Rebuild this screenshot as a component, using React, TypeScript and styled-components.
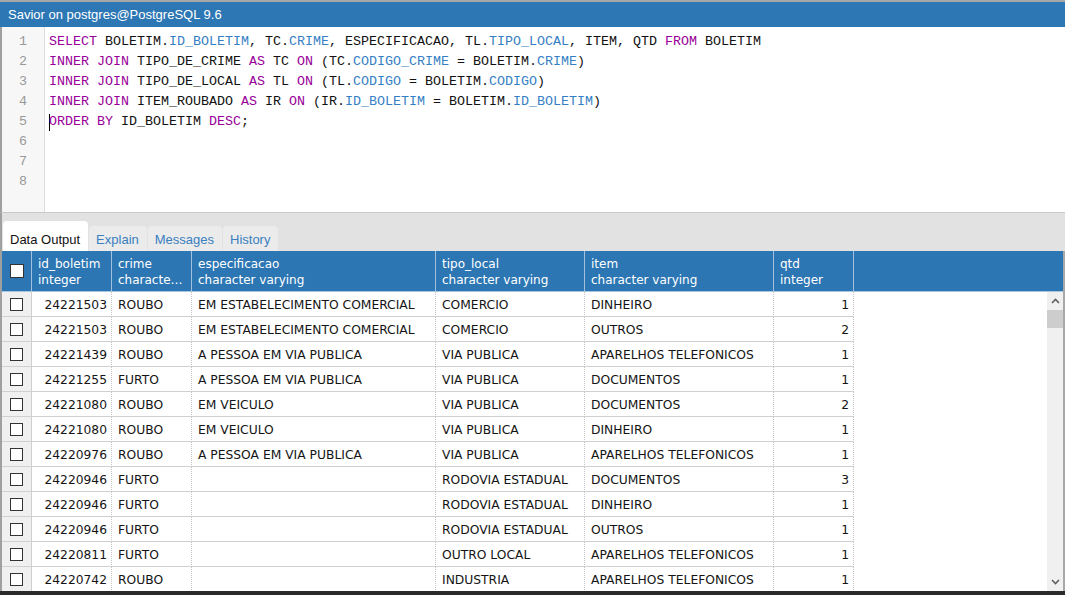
import React from 'react';
import styled, { createGlobalStyle } from 'styled-components';

const GlobalStyle = createGlobalStyle`
    html, body {
        margin: 0;
        padding: 0;
        background: #ffffff;
        overflow: hidden;
    }
`;

const Frame = styled.div`
    width: 1065px;
    height: 595px;
    display: flex;
    flex-direction: column;
    border-top: 2px solid #a7a7a7;
    box-sizing: border-box;
    background: #ffffff;
    overflow: hidden;
`;

const TitleBar = styled.div`
    height: 25px;
    flex: none;
    background: #2d77b4;
    color: #ffffff;
    font-family: 'Liberation Sans', Arial, sans-serif;
    font-size: 13px;
    line-height: 25px;
    padding-left: 8px;
`;

const Editor = styled.div`
    height: 185px;
    flex: none;
    display: flex;
    border-left: 2px solid #a0a0a0;
    border-bottom: 1px solid #c9c9c9;
    background: #ffffff;
`;

const Gutter = styled.div`
    width: 42px;
    flex: none;
    background: #f7f7f7;
    border-right: 1px solid #dddddd;
    padding-top: 5px;
    font-family: 'Liberation Mono', 'Courier New', monospace;
    font-size: 13.33px;
    color: #999999;
`;

const LineNo = styled.div`
    height: 20px;
    line-height: 20px;
    text-align: center;
`;

const Code = styled.div`
    flex: 1;
    padding: 5px 0 0 4px;
    font-family: 'Liberation Mono', 'Courier New', monospace;
    font-size: 13.33px;
    color: #111111;
`;

const CodeLine = styled.div`
    height: 20px;
    line-height: 20px;
    white-space: pre;
    display: flex;
    align-items: center;
`;

const Token = styled.span<{ $kind: 'kw' | 'field' | 'plain' }>`
    color: ${(p) => (p.$kind === 'kw' ? '#990099' : p.$kind === 'field' ? '#3580c4' : '#111111')};
`;

const Cursor = styled.span`
    display: inline-block;
    width: 1px;
    height: 17px;
    background: #000000;
    margin-right: -1px;
`;

const TabBar = styled.div`
    height: 38px;
    flex: none;
    display: flex;
    align-items: flex-end;
    gap: 1px;
    background: #e2e2e2;
    border-left: 2px solid #a0a0a0;
    box-sizing: border-box;
    padding-left: 1px;
`;

const Tab = styled.div<{ $active?: boolean }>`
    height: ${(p) => (p.$active ? '30px' : '25px')};
    line-height: ${(p) => (p.$active ? '37px' : '27px')};
    padding: 0 8px 0 7px;
    border-radius: 4px 4px 0 0;
    background: ${(p) => (p.$active ? '#ffffff' : '#ebebeb')};
    color: ${(p) => (p.$active ? '#111111' : '#3a7fc0')};
    font-family: 'Liberation Sans', Arial, sans-serif;
    font-size: 13px;
`;

const Results = styled.div`
    flex: 1;
    display: flex;
    flex-direction: column;
    border-left: 2px solid #a0a0a0;
    border-right: 2px solid #a8a8a8;
    min-height: 0;
    font-family: 'DejaVu Sans', Verdana, sans-serif;
`;

const COLS = '30px 80px 80px 244px 149px 189px 80px 1fr';

const HeaderRow = styled.div`
    height: 41px;
    flex: none;
    display: grid;
    grid-template-columns: ${COLS};
    background: #2c76b3;
    border-bottom: 1px solid #a9c6e0;
    box-sizing: border-box;
`;

const HeadCell = styled.div<{ $last?: boolean }>`
    border-right: ${(p) => (p.$last ? 'none' : '1px solid #a3c1dc')};
    padding: 5px 6px 0;
    color: #ffffff;
    font-size: 12px;
    line-height: 16px;
    white-space: nowrap;
    overflow: hidden;
`;

const HeadLine = styled.div`
    overflow: hidden;
    text-overflow: ellipsis;
`;

const HeadCheckCell = styled.div`
    border-right: 1px solid #a3c1dc;
    display: flex;
    align-items: center;
    justify-content: center;
`;

const Box = styled.span<{ $size: number }>`
    width: ${(p) => p.$size}px;
    height: ${(p) => p.$size}px;
    box-sizing: border-box;
    border: 1px solid #333333;
    background: #ffffff;
    display: block;
`;

const Body = styled.div`
    flex: 1;
    display: flex;
    min-height: 0;
`;

const Rows = styled.div`
    flex: 1;
    overflow: hidden;
`;

const Row = styled.div`
    height: 25px;
    display: grid;
    grid-template-columns: ${COLS};
    box-sizing: border-box;
`;

const CheckCell = styled.div`
    background: #f0f0f0;
    border-right: 1px solid #cfcfcf;
    border-bottom: 1px solid #d0d0d0;
    display: flex;
    align-items: center;
    justify-content: center;
`;

const Cell = styled.div<{ $right?: boolean }>`
    border-right: 1px dotted #c4c4c4;
    border-bottom: 1px solid #d0d0d0;
    padding: 3px 4px 0 6px;
    line-height: 21px;
    font-size: 12.3px;
    color: #141414;
    text-align: ${(p) => (p.$right ? 'right' : 'left')};
    white-space: nowrap;
    overflow: hidden;
`;

const Filler = styled.div``;

const Scrollbar = styled.div`
    width: 16px;
    flex: none;
    background: #f0f0f0;
    display: flex;
    flex-direction: column;
    align-items: center;
`;

const Arrow = styled.div`
    height: 18px;
    width: 100%;
    display: flex;
    align-items: center;
    justify-content: center;
`;

const Thumb = styled.div`
    width: 100%;
    height: 18px;
    background: #cdcdcd;
`;

const Track = styled.div`
    flex: 1;
`;

const BottomEdge = styled.div`
    height: 4px;
    flex: none;
    background: #2a2a2a;
`;

type Kind = 'kw' | 'field' | 'plain';
const k = (t: string): [string, Kind] => [t, 'kw'];
const f = (t: string): [string, Kind] => [t, 'field'];
const p = (t: string): [string, Kind] => [t, 'plain'];

const codeLines: [string, Kind][][] = [
    [k('SELECT'), p(' BOLETIM.'), f('ID_BOLETIM'), p(', TC.'), f('CRIME'), p(', ESPECIFICACAO, TL.'), f('TIPO_LOCAL'), p(', ITEM, QTD '), k('FROM'), p(' BOLETIM')],
    [k('INNER JOIN'), p(' TIPO_DE_CRIME '), k('AS'), p(' TC '), k('ON'), p(' (TC.'), f('CODIGO_CRIME'), p(' = BOLETIM.'), f('CRIME'), p(')')],
    [k('INNER JOIN'), p(' TIPO_DE_LOCAL '), k('AS'), p(' TL '), k('ON'), p(' (TL.'), f('CODIGO'), p(' = BOLETIM.'), f('CODIGO'), p(')')],
    [k('INNER JOIN'), p(' ITEM_ROUBADO '), k('AS'), p(' IR '), k('ON'), p(' (IR.'), f('ID_BOLETIM'), p(' = BOLETIM.'), f('ID_BOLETIM'), p(')')],
    [k('ORDER BY'), p(' ID_BOLETIM '), k('DESC'), p(';')],
    [],
    [],
    [],
];

const headers = [
    ['id_boletim', 'integer'],
    ['crime', 'character varying'],
    ['especificacao', 'character varying'],
    ['tipo_local', 'character varying'],
    ['item', 'character varying'],
    ['qtd', 'integer'],
];

const rows = [
    ['24221503', 'ROUBO', 'EM ESTABELECIMENTO COMERCIAL', 'COMERCIO', 'DINHEIRO', '1'],
    ['24221503', 'ROUBO', 'EM ESTABELECIMENTO COMERCIAL', 'COMERCIO', 'OUTROS', '2'],
    ['24221439', 'ROUBO', 'A PESSOA EM VIA PUBLICA', 'VIA PUBLICA', 'APARELHOS TELEFONICOS', '1'],
    ['24221255', 'FURTO', 'A PESSOA EM VIA PUBLICA', 'VIA PUBLICA', 'DOCUMENTOS', '1'],
    ['24221080', 'ROUBO', 'EM VEICULO', 'VIA PUBLICA', 'DOCUMENTOS', '2'],
    ['24221080', 'ROUBO', 'EM VEICULO', 'VIA PUBLICA', 'DINHEIRO', '1'],
    ['24220976', 'ROUBO', 'A PESSOA EM VIA PUBLICA', 'VIA PUBLICA', 'APARELHOS TELEFONICOS', '1'],
    ['24220946', 'FURTO', '', 'RODOVIA ESTADUAL', 'DOCUMENTOS', '3'],
    ['24220946', 'FURTO', '', 'RODOVIA ESTADUAL', 'DINHEIRO', '1'],
    ['24220946', 'FURTO', '', 'RODOVIA ESTADUAL', 'OUTROS', '1'],
    ['24220811', 'FURTO', '', 'OUTRO LOCAL', 'APARELHOS TELEFONICOS', '1'],
    ['24220742', 'ROUBO', '', 'INDUSTRIA', 'APARELHOS TELEFONICOS', '1'],
];

const Chevron = ({ up }: { up?: boolean }) => (
    <svg width="9" height="6" viewBox="0 0 9 6">
        <path
            d={up ? 'M1 5 L4.5 1.5 L8 5' : 'M1 1 L4.5 4.5 L8 1'}
            fill="none"
            stroke="#606060"
            strokeWidth="1.6"
        />
    </svg>
);

export const App = () => {
    return (
        <>
            <GlobalStyle />
            <Frame>
                <TitleBar>{'Savior on postgres@PostgreSQL 9.6'}</TitleBar>
                <Editor>
                    <Gutter>
                        {codeLines.map((_, i) => (
                            <LineNo key={i}>{i + 1}</LineNo>
                        ))}
                    </Gutter>
                    <Code>
                        {codeLines.map((line, i) => (
                            <CodeLine key={i}>
                                {i === 4 && <Cursor />}
                                {line.map(([text, kind], j) => (
                                    <Token key={j} $kind={kind}>{text}</Token>
                                ))}
                            </CodeLine>
                        ))}
                    </Code>
                </Editor>
                <TabBar>
                    <Tab $active>{'Data Output'}</Tab>
                    <Tab>{'Explain'}</Tab>
                    <Tab>{'Messages'}</Tab>
                    <Tab>{'History'}</Tab>
                </TabBar>
                <Results>
                    <HeaderRow>
                        <HeadCheckCell>
                            <Box $size={14} />
                        </HeadCheckCell>
                        {headers.map(([name, type]) => (
                            <HeadCell key={name}>
                                <HeadLine>{name}</HeadLine>
                                <HeadLine>{type}</HeadLine>
                            </HeadCell>
                        ))}
                        <HeadCell $last />
                    </HeaderRow>
                    <Body>
                        <Rows>
                            {rows.map((r, i) => (
                                <Row key={i}>
                                    <CheckCell>
                                        <Box $size={13} />
                                    </CheckCell>
                                    <Cell $right>{r[0]}</Cell>
                                    <Cell>{r[1]}</Cell>
                                    <Cell>{r[2]}</Cell>
                                    <Cell>{r[3]}</Cell>
                                    <Cell>{r[4]}</Cell>
                                    <Cell $right>{r[5]}</Cell>
                                    <Filler />
                                </Row>
                            ))}
                        </Rows>
                        <Scrollbar>
                            <Arrow>
                                <Chevron up />
                            </Arrow>
                            <Thumb />
                            <Track />
                            <Arrow>
                                <Chevron />
                            </Arrow>
                        </Scrollbar>
                    </Body>
                </Results>
                <BottomEdge />
            </Frame>
        </>
    );
};

export default App;
